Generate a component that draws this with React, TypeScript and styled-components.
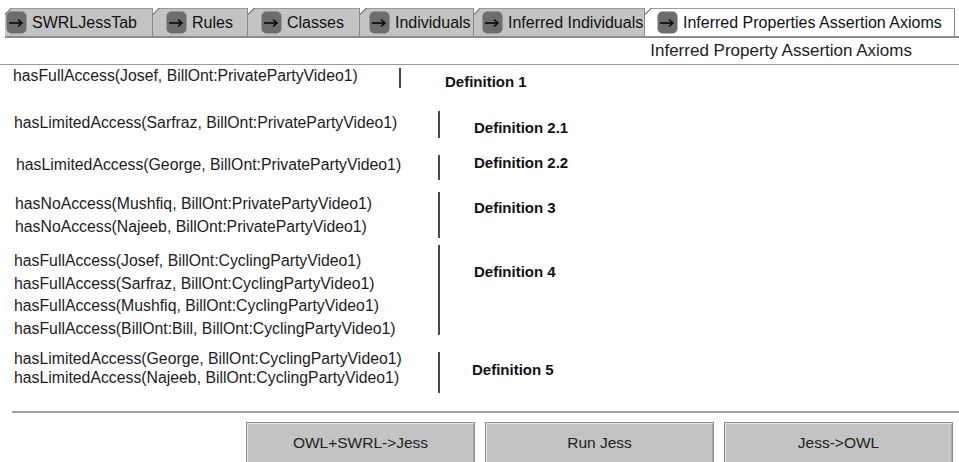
import React from "react";
import styled, { createGlobalStyle } from "styled-components";

const GlobalStyle = createGlobalStyle`
  html, body {
    margin: 0;
    padding: 0;
    background: #fff;
    overflow: hidden;
  }
  body {
    font-family: "Liberation Sans", Arial, sans-serif;
    color: #1a1a1a;
  }
`;

const Page = styled.div`
  width: 959px;
  height: 462px;
  overflow: hidden;
  background: #fff;
`;

const TabBar = styled.div`
  display: flex;
  margin: 8px 0 0 5px;
  border-bottom: 2px solid #8c8c8c;
`;

const Tab = styled.div<{ $active?: boolean; $w: number; $pad: number }>`
  position: relative;
  box-sizing: border-box;
  width: ${(p) => p.$w}px;
  height: 28px;
  display: flex;
  align-items: center;
  gap: 5px;
  padding-left: ${(p) => p.$pad}px;
  background: ${(p) => (p.$active ? "#fff" : "#c3c3c3")};
  border-top: 1px solid #9a9a9a;
  border-right: 1px solid #8a8a8a;
  font-size: 16px;
  color: #111;
  white-space: nowrap;

  &::before {
    content: "";
    position: absolute;
    top: -1px;
    left: 0;
    width: 7px;
    height: 7px;
    background: linear-gradient(135deg, #fff 0 4px, #8a8a8a 4px 5px, transparent 5px);
  }
`;

const Header = styled.div`
  height: 26px;
  display: flex;
  align-items: center;
  justify-content: flex-end;
  padding-right: 47px;
  border-bottom: 1px solid #9a9a9a;
  font-size: 17px;
  color: #222;
`;

const Results = styled.div`
  display: flex;
  flex-direction: column;
`;

const Group = styled.div<{ $mt: number; $h: number; $left: number }>`
  display: flex;
  margin-top: ${(p) => p.$mt}px;
  height: ${(p) => p.$h}px;
  padding-left: ${(p) => p.$left}px;
`;

const Lines = styled.div<{ $w: number; $lh: number; $pt: number }>`
  width: ${(p) => p.$w}px;
  padding-top: ${(p) => p.$pt}px;
  font-size: 15.8px;
  line-height: ${(p) => p.$lh}px;
  white-space: nowrap;
  color: #1c1c1c;
`;

const Bar = styled.div<{ $top: number }>`
  width: 2px;
  margin-top: ${(p) => p.$top}px;
  background: #4a4a4a;
`;

const Label = styled.div<{ $gap: number; $pt: number }>`
  margin-left: ${(p) => p.$gap}px;
  padding-top: ${(p) => p.$pt}px;
  font-size: 15px;
  font-weight: bold;
  line-height: 16px;
  color: #111;
`;

const Divider = styled.div`
  margin: 18px 0 0 12px;
  border-top: 2px solid #a0a0a0;
`;

const ButtonRow = styled.div`
  display: flex;
  justify-content: flex-end;
  gap: 10px;
  padding: 9px 6px 0 0;
`;

const Button = styled.button`
  width: 229px;
  height: 44px;
  background: #c3c3c3;
  border: 1px solid #8c8c8c;
  box-shadow: inset 1px 1px 0 #e4e4e4, inset -1px -1px 0 #a8a8a8;
  font-family: "Liberation Sans", Arial, sans-serif;
  font-size: 15.5px;
  color: #222;
  padding: 0 0 2px;
`;

const TabIcon = () => (
  <svg width="21" height="23" viewBox="0 0 21 23">
    <rect x="0.5" y="0.5" width="20" height="22" rx="5" fill="#6d6d6d" />
    <path d="M3 12 H16 M12 8.5 L16 12 L12 15.5" stroke="#000" strokeWidth="1.4" fill="none" />
  </svg>
);

const tabs = [
  { name: "SWRLJessTab", w: 148, pad: 1 },
  { name: "Rules", w: 95, pad: 13 },
  { name: "Classes", w: 112, pad: 13 },
  { name: "Individuals", w: 114, pad: 9 },
  { name: "Inferred Individuals", w: 171, pad: 8 },
  { name: "Inferred Properties Assertion Axioms", w: 310, pad: 12, active: true },
];

const groups = [
  {
    lines: ["hasFullAccess(Josef, BillOnt:PrivatePartyVideo1)"],
    label: "Definition 1",
    mt: 3, h: 20, left: 13, w: 386, lh: 16, pt: 0, barTop: 0, gap: 44, labelPt: 6,
  },
  {
    lines: ["hasLimitedAccess(Sarfraz, BillOnt:PrivatePartyVideo1)"],
    label: "Definition 2.1",
    mt: 23, h: 27, left: 14, w: 424, lh: 16, pt: 4, barTop: 0, gap: 34, labelPt: 9,
  },
  {
    lines: ["hasLimitedAccess(George, BillOnt:PrivatePartyVideo1)"],
    label: "Definition 2.2",
    mt: 17, h: 25, left: 16, w: 422, lh: 16, pt: 2, barTop: 0, gap: 34, labelPt: 0,
  },
  {
    lines: [
      "hasNoAccess(Mushfiq, BillOnt:PrivatePartyVideo1)",
      "hasNoAccess(Najeeb, BillOnt:PrivatePartyVideo1)",
    ],
    label: "Definition 3",
    mt: 12, h: 46, left: 15, w: 423, lh: 23, pt: 0, barTop: 0, gap: 34, labelPt: 8,
  },
  {
    lines: [
      "hasFullAccess(Josef, BillOnt:CyclingPartyVideo1)",
      "hasFullAccess(Sarfraz, BillOnt:CyclingPartyVideo1)",
      "hasFullAccess(Mushfiq, BillOnt:CyclingPartyVideo1)",
      "hasFullAccess(BillOnt:Bill, BillOnt:CyclingPartyVideo1)",
    ],
    label: "Definition 4",
    mt: 7, h: 90, left: 14, w: 424, lh: 22.7, pt: 5, barTop: 0, gap: 34, labelPt: 19,
  },
  {
    lines: [
      "hasLimitedAccess(George, BillOnt:CyclingPartyVideo1)",
      "hasLimitedAccess(Najeeb, BillOnt:CyclingPartyVideo1)",
    ],
    label: "Definition 5",
    mt: 14, h: 44, left: 14, w: 424, lh: 19, pt: 0, barTop: 3, gap: 32, labelPt: 13,
  },
];

const App: React.FC = () => {
  return (
    <Page>
      <GlobalStyle />
      <TabBar>
        {tabs.map((t) => (
          <Tab key={t.name} $w={t.w} $pad={t.pad} $active={t.active}>
            <TabIcon />
            <span>{t.name}</span>
          </Tab>
        ))}
      </TabBar>
      <Header>Inferred Property Assertion Axioms</Header>

      <Results>
        {groups.map((g) => (
          <Group key={g.label} $mt={g.mt} $h={g.h} $left={g.left}>
            <Lines $w={g.w} $lh={g.lh} $pt={g.pt}>
              {g.lines.map((l) => (
                <div key={l}>{l}</div>
              ))}
            </Lines>
            <Bar $top={g.barTop} />
            <Label $gap={g.gap} $pt={g.labelPt}>
              {g.label}
            </Label>
          </Group>
        ))}
      </Results>

      <Divider />
      <ButtonRow>
        <Button>OWL+SWRL-&gt;Jess</Button>
        <Button>Run Jess</Button>
        <Button>Jess-&gt;OWL</Button>
      </ButtonRow>
    </Page>
  );
};

export default App;
